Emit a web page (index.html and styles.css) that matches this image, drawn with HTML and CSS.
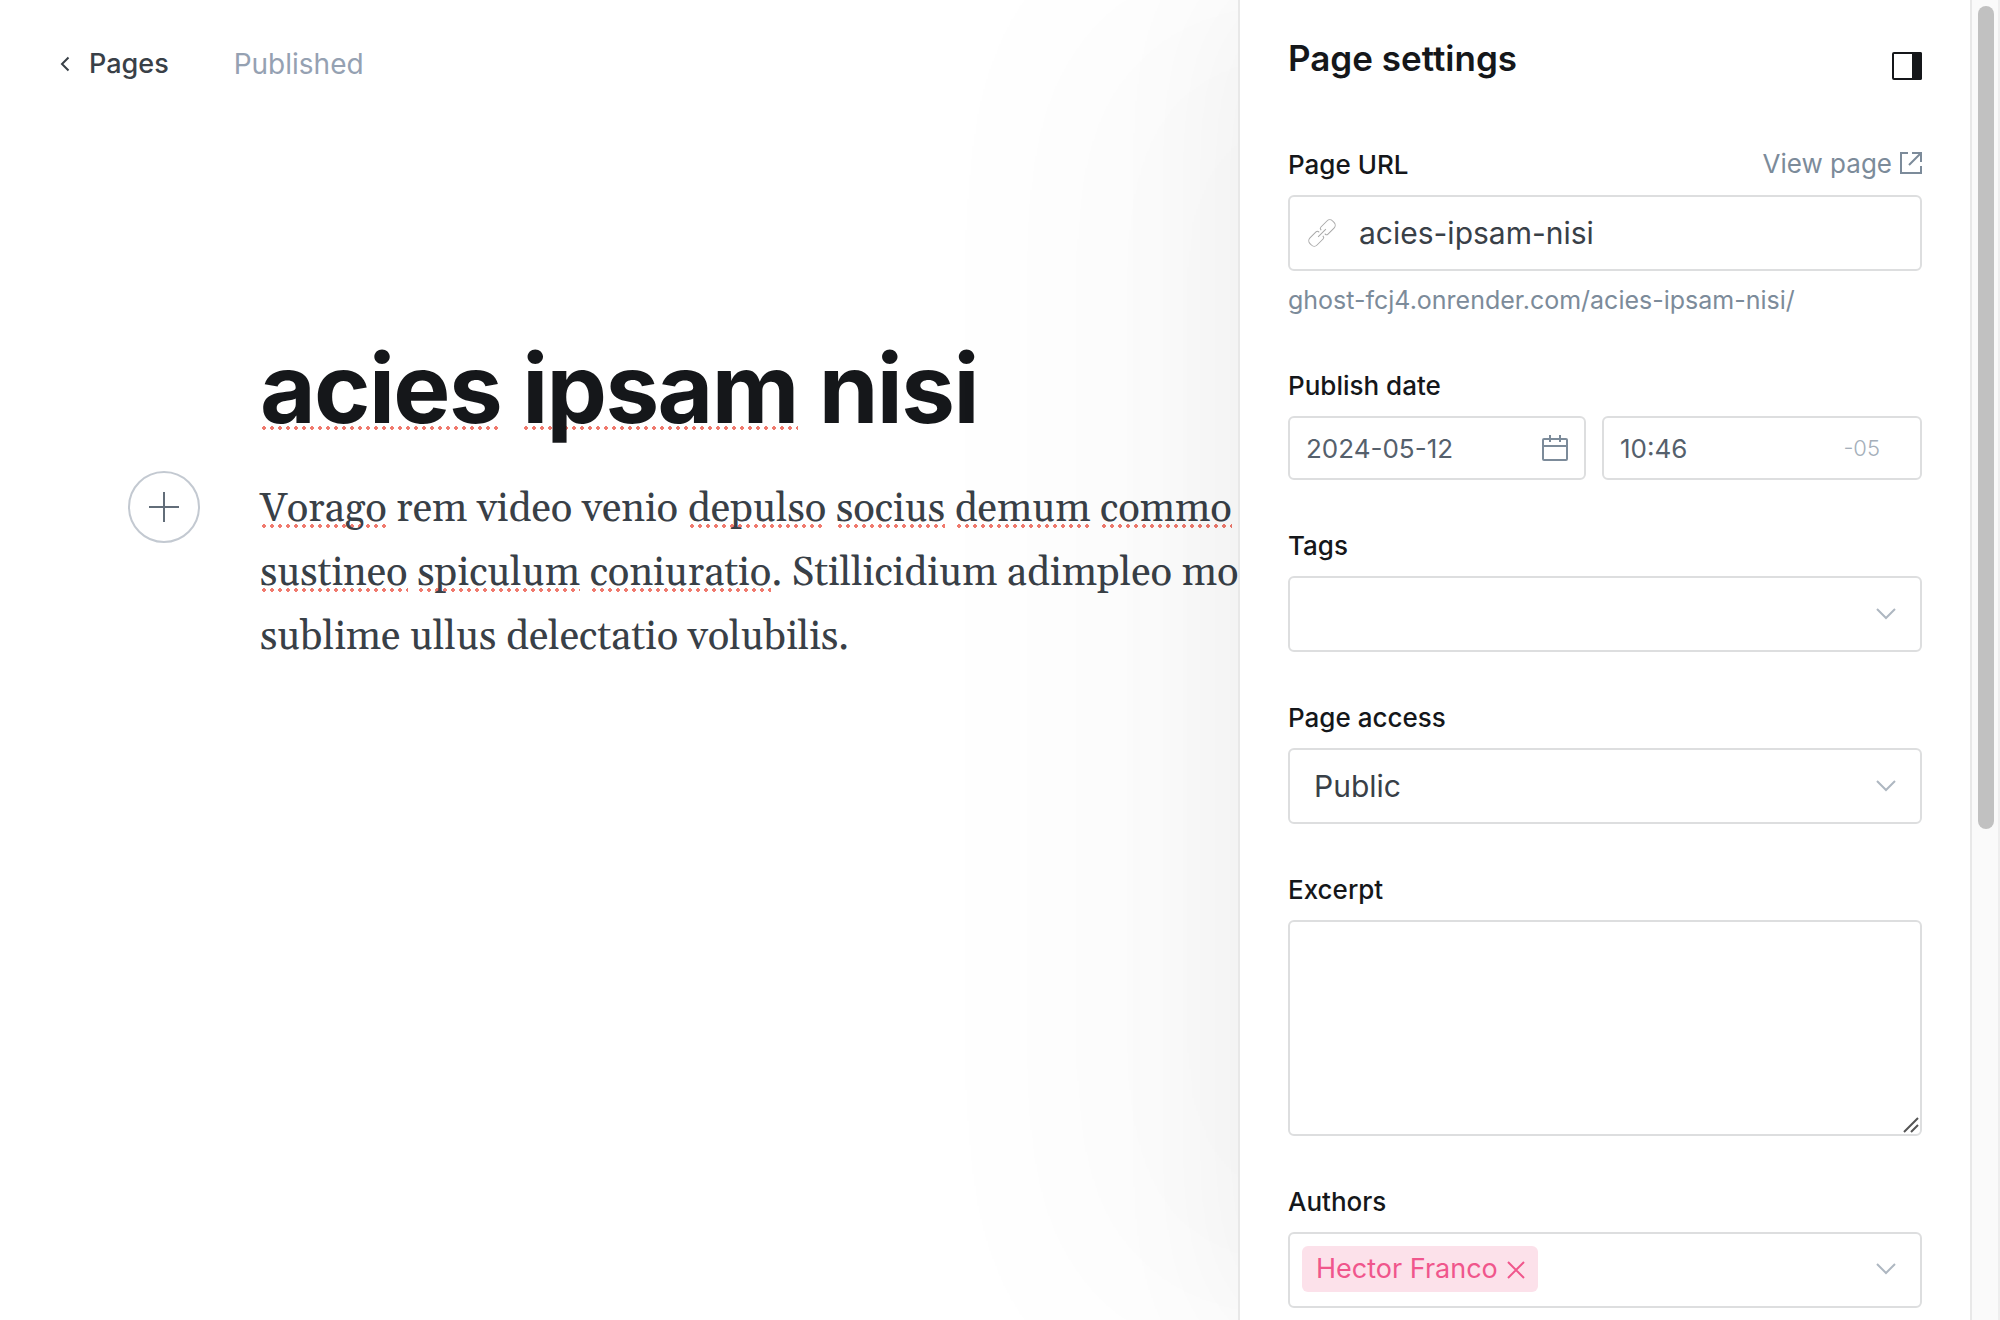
FILE: index.html
```html
<!DOCTYPE html>
<html lang="en">
<head>
<meta charset="utf-8">
<meta name="viewport" content="width=device-width, initial-scale=1">
<title>Page editor</title>
<link rel="stylesheet" href="styles.css">
</head>
<body>
<div class="app">
  <main class="editor">
    <header class="topbar">
      <a class="back" href="#pages">
        <svg class="back-icon" viewBox="0 0 10 16" aria-hidden="true"><path d="M8.500 1.500 2 8l6.500 6.500"/></svg>
        Pages
      </a>
      <span class="status">Published</span>
    </header>
    <article class="post">
      <h1 class="post-title"><span class="typo">acies</span> <span class="typo">ipsam</span> nisi</h1>
      <div class="post-body">
        <button class="add-card" type="button" aria-label="Add a card">
          <svg viewBox="0 0 32 32" aria-hidden="true"><path d="M16 1v30M1 16h30"/></svg>
        </button>
        <p class="post-text"><span class="typo">Vorago</span> rem video venio <span class="typo">depulso</span> <span class="typo">socius</span> <span class="typo">demum</span> <span class="typo">commo</span><br><span class="typo">sustineo</span> <span class="typo">spiculum</span> <span class="typo">coniuratio</span>. Stillicidium adimpleo mo<br>sublime ullus delectatio volubilis.</p>
      </div>
    </article>
  </main>

  <aside class="settings">
    <div class="settings-head">
      <h2 class="settings-title">Page settings</h2>
      <button class="toggle" type="button" aria-label="Close settings">
        <svg viewBox="0 0 30 28" aria-hidden="true"><rect x="1" y="1" width="28" height="26" rx="1"/><path class="solid" d="M20 0h8a2 2 0 0 1 2 2v24a2 2 0 0 1-2 2h-8z"/></svg>
      </button>
    </div>

    <form class="fields">
      <div class="field">
        <div class="label-row">
          <label class="label" for="url">Page URL</label>
          <a class="view-link" href="#view">View page
            <svg viewBox="0 0 22 22" aria-hidden="true"><path d="M8 1H1v20h20v-7M12 1h9v9M21 1 9 13"/></svg>
          </a>
        </div>
        <div class="control url">
          <svg class="link-icon" viewBox="0 0 26 26" aria-hidden="true"><g transform="rotate(-45 13 13)"><path d="M11.500 10.500V10a2 2 0 0 0-2-2H1a4 4 0 0 0-4 4v2a4 4 0 0 0 4 4h8.500a2 2 0 0 0 2-2v-.5M14.500 10.500V10a2 2 0 0 1 2-2H25a4 4 0 0 1 4 4v2a4 4 0 0 1-4 4h-8.500a2 2 0 0 1-2-2v-.5M7.500 13h11"/></g></svg>
          <input class="input" id="url" type="text" value="acies-ipsam-nisi">
        </div>
        <p class="hint">ghost-fcj4.onrender.com/acies-ipsam-nisi/</p>
      </div>

      <div class="field">
        <label class="label" for="date">Publish date</label>
        <div class="date-row">
          <div class="control small date">
            <input class="input" id="date" type="text" value="2024-05-12">
            <svg class="calendar-icon" viewBox="0 0 26 26" aria-hidden="true"><path d="M2 4h22a1 1 0 0 1 1 1v19a1 1 0 0 1-1 1H2a1 1 0 0 1-1-1V5a1 1 0 0 1 1-1zM1 11h24M8 0v7M18 0v7"/></svg>
          </div>
          <div class="control small time">
            <input class="input" type="text" aria-label="Publish time" value="10:46">
            <span class="zone">-05</span>
          </div>
        </div>
      </div>

      <div class="field">
        <label class="label" for="tags">Tags</label>
        <div class="control">
          <input class="input" id="tags" type="text">
          <svg class="chevron" viewBox="0 0 20 12" aria-hidden="true"><path d="m1 1 9 9 9-9"/></svg>
        </div>
      </div>

      <div class="field">
        <label class="label" for="access">Page access</label>
        <div class="control">
          <select class="input" id="access"><option>Public</option><option>Members only</option></select>
          <svg class="chevron" viewBox="0 0 20 12" aria-hidden="true"><path d="m1 1 9 9 9-9"/></svg>
        </div>
      </div>

      <div class="field">
        <label class="label" for="excerpt">Excerpt</label>
        <div class="area-wrap">
          <textarea class="area" id="excerpt"></textarea>
          <svg class="grip" viewBox="0 0 14 14" aria-hidden="true"><path d="M0 14 14 0M7 14l7-7"/></svg>
        </div>
      </div>

      <div class="field">
        <label class="label" for="authors">Authors</label>
        <div class="control authors">
          <span class="chip">Hector Franco
            <button class="chip-remove" type="button" aria-label="Remove Hector Franco"><svg viewBox="0 0 16 16" aria-hidden="true"><path d="m0 0 16 16M16 0 0 16"/></svg></button>
          </span>
          <input class="input" id="authors" type="text">
          <svg class="chevron" viewBox="0 0 20 12" aria-hidden="true"><path d="m1 1 9 9 9-9"/></svg>
        </div>
      </div>
    </form>
  </aside>
  <div class="scrollbar"><div class="thumb"></div></div>
</div>
</body>
</html>
```
FILE: styles.css
```css
* { box-sizing: border-box; }

body {
  margin: 0;
  background: #fff;
  font-family: Inter, "Liberation Sans", sans-serif;
  color: #15171a;
}

h1, h2, p { margin: 0; }

svg {
  display: block;
  flex: none;
  overflow: visible;
  fill: none;
  stroke: currentColor;
  stroke-width: 2;
}

button {
  padding: 0;
  border: 0;
  background: none;
  color: inherit;
  font: inherit;
}

a { color: inherit; text-decoration: none; }

.app {
  display: flex;
  height: 100vh;
  overflow: hidden;
}

/* Editor */

.editor {
  flex: 1;
  min-width: 0;
  overflow: hidden;
}

.topbar {
  display: flex;
  align-items: center;
  gap: 65px;
  padding: 44px 60px 0;
  font-size: 27px;
  line-height: 40px;
}

.back {
  display: flex;
  align-items: center;
  gap: 19px;
  font-weight: 500;
  color: #394047;
}

.back-icon {
  width: 10px;
  height: 16px;
}

.status {
  font-size: 28px;
  color: #95a1b2;
}

.post { padding: 248px 0 0 260px; }

.post-title {
  font-size: 96px;
  line-height: 112px;
  font-weight: 700;
  letter-spacing: -0.017em;
  white-space: nowrap;
}

.post-body {
  position: relative;
  margin-top: 34px;
}

.add-card {
  position: absolute;
  left: -132px;
  top: -7px;
  display: grid;
  place-items: center;
  width: 72px;
  height: 72px;
  border: 2px solid #c3c9d1;
  border-radius: 50%;
  color: #626d79;
}

.add-card svg {
  width: 32px;
  height: 32px;
}

.post-text {
  font-family: Georgia, Gelasio, "Liberation Serif", serif;
  font-size: 40px;
  line-height: 64px;
  color: #394047;
  white-space: nowrap;
}

/* Spell-check dots under a word */
.typo {
  background: radial-gradient(circle closest-side, #f07a6e 80%, transparent) left bottom 7px / 8px 4px repeat-x;
}

.post-title .typo { background-position: left bottom 16px; }

/* Settings panel */

.settings {
  position: relative;
  flex: none;
  width: 732px;
  height: 100%;
  padding: 35px 48px 0;
  border-left: 2px solid #e8e8e8;
  background: #fff;
  box-shadow: 0 0 140px rgba(0, 0, 0, 0.05), -160px 0 220px rgba(0, 0, 0, 0.025);
}

.settings-head {
  display: flex;
  justify-content: space-between;
  margin-bottom: 66px;
}

.settings-title {
  font-size: 35px;
  line-height: 46px;
  font-weight: 600;
}

.toggle {
  align-self: end;
  margin-bottom: 1px;
}

.toggle svg {
  width: 30px;
  height: 28px;
}

.toggle .solid {
  fill: currentColor;
  stroke: none;
}

.field { margin-bottom: 48px; }

.label {
  display: block;
  margin-bottom: 12px;
  font-size: 26px;
  line-height: 36px;
  font-weight: 500;
}

.label-row {
  display: flex;
  justify-content: space-between;
}

.view-link {
  display: flex;
  align-items: center;
  gap: 8px;
  height: 32px;
  font-size: 26px;
  color: #7c8b9a;
}

.view-link svg {
  width: 22px;
  height: 22px;
}

.control {
  display: flex;
  align-items: center;
  height: 76px;
  padding: 0 24px;
  border: 2px solid #dddedf;
  border-radius: 6px;
}

.input {
  flex: 1;
  min-width: 0;
  height: 100%;
  padding: 0;
  border: 0;
  outline: 0;
  background: none;
  appearance: none;
  font: inherit;
  font-size: 30px;
  color: #394047;
}

.url { padding-left: 19px; }

.link-icon {
  width: 26px;
  height: 26px;
  margin-right: 24px;
  color: #a8a8a8;
  stroke-width: 1;
}

.hint {
  margin-top: 11px;
  padding-bottom: 2px;
  font-size: 25px;
  line-height: 36px;
  color: #7c8b9a;
}

.date-row {
  display: flex;
  gap: 16px;
}

.small {
  height: 64px;
  padding: 0 16px;
}

.small .input {
  font-size: 26px;
  color: #55606c;
}

.date { width: 298px; }

.time {
  flex: 1;
  min-width: 0;
}

.calendar-icon {
  width: 26px;
  height: 26px;
  color: #7c8b9a;
}

.zone {
  margin-right: 24px;
  font-size: 22px;
  font-weight: 300;
  color: #a5afba;
}

.chevron {
  width: 20px;
  height: 12px;
  color: #aeb7c1;
}

.area-wrap { position: relative; }

.area {
  display: block;
  width: 100%;
  height: 216px;
  border: 2px solid #dddedf;
  border-radius: 6px;
  outline: 0;
  resize: none;
  font: inherit;
}

.grip {
  position: absolute;
  right: 4px;
  bottom: 4px;
  width: 14px;
  height: 14px;
  color: #555;
}

.authors { padding: 0 24px 2px 12px; }

.chip {
  display: flex;
  align-items: center;
  gap: 10px;
  height: 46px;
  padding: 0 14px 2px;
  border-radius: 6px;
  background: #fce1ea;
  color: #f0568c;
  font-size: 27px;
}

.chip-remove { padding-top: 4px; }

.chip-remove svg {
  width: 16px;
  height: 16px;
}

.scrollbar {
  position: relative;
  flex: none;
  width: 30px;
  padding: 6px 4px 0 6px;
  border-left: 2px solid #e8e8e8;
  border-right: 2px solid #eee;
  background: #fafafa;
}

.thumb {
  height: 62.6%;
  border-radius: 8px;
  background: #c1c1c1;
}
```
